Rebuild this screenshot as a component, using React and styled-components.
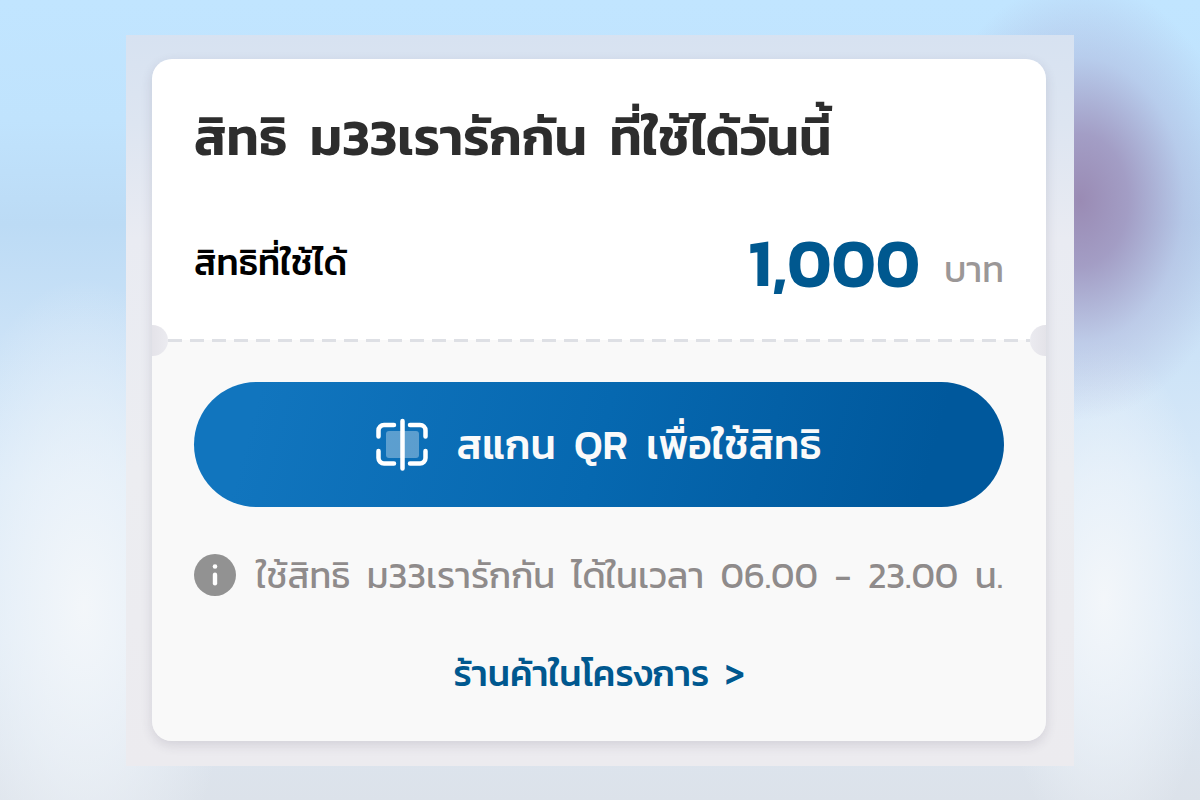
import React from 'react';
import styled, { createGlobalStyle } from 'styled-components';

const GlobalStyle = createGlobalStyle`
  *, *::before, *::after { box-sizing: border-box; }
  body {
    margin: 0;
    font-family: Kanit, Prompt, "Noto Sans Thai", "Noto Sans", "Open Sans", sans-serif;
  }
`;

const Page = styled.div`
  min-height: 100vh;
  padding: 35px 24px 34px;
  background:
    radial-gradient(ellipse 160px 220px at 90% 25%, #9a8bb4 0%, rgba(158, 146, 188, 0.85) 30%, rgba(170, 170, 210, 0.4) 65%, rgba(180, 200, 235, 0) 100%),
    radial-gradient(ellipse 150px 330px at 7% 76%, rgba(244, 247, 250, 0.95) 0%, rgba(240, 245, 250, 0.6) 50%, rgba(235, 243, 250, 0) 100%),
    radial-gradient(ellipse 110px 260px at 92% 75%, rgba(244, 247, 250, 0.95) 0%, rgba(240, 245, 250, 0.6) 50%, rgba(235, 243, 250, 0) 100%),
    linear-gradient(180deg, #c1e5ff 0%, #c0e3fd 15%, #bcdbf5 28%, #cbe2f7 42%, #d8e9f8 60%, #dde9f5 80%, #dce2ea 100%);
`;

const Panel = styled.main`
  width: 79vw;
  min-width: 320px;
  margin: 0 auto;
  padding: 24px 28px 25px 26px;
  background: linear-gradient(180deg, #d7e2f1 0%, #dde5f1 12%, #e9ebf2 28%, #ecedf1 60%, #ecebef 100%);
`;

const Ticket = styled.article`
  border-radius: 20px;
  box-shadow: 0 4px 12px rgba(60, 50, 80, 0.14);
  white-space: pre-wrap;
`;

const Balance = styled.section`
  padding: 42px;
  min-height: 281px;
  background: #fff;
  border-radius: 20px 20px 0 0;
`;

const Title = styled.h1`
  margin: 0 0 57px;
  font-size: 52px;
  line-height: 72px;
  font-weight: 600;
  color: #2d2d2d;
`;

const BalanceRow = styled.div`
  display: flex;
  align-items: center;
  justify-content: space-between;
`;

const Label = styled.span`
  font-size: 36px;
  line-height: 56px;
  font-weight: 500;
  color: #000;
`;

const Amount = styled.p`
  display: flex;
  align-items: flex-end;
  gap: 24px;
  margin: 0;
`;

const Value = styled.strong`
  font-size: 67px;
  line-height: 64px;
  font-weight: 600;
  color: #00588f;
`;

const Unit = styled.span`
  font-size: 36px;
  line-height: 50px;
  font-weight: 400;
  color: #9b9797;
`;

const Actions = styled.section`
  position: relative;
  display: flex;
  flex-direction: column;
  padding: 42px 42px 40px;
  background: #f9f9f9;
  border-radius: 0 0 20px 20px;
`;

const Perforation = styled.div`
  position: absolute;
  top: -16px;
  left: 0;
  right: 0;
  height: 32px;
  display: flex;
  align-items: center;
  justify-content: space-between;
`;

const Notch = styled.span`
  width: 16px;
  height: 31px;
  border-radius: ${({ $side }) => ($side === 'left' ? '0 16px 16px 0' : '16px 0 0 16px')};
  background: linear-gradient(${({ $side }) => ($side === 'left' ? '90deg' : '270deg')}, #e4e3e9, #ebebf0);
`;

const Dashes = styled.span`
  flex: 1;
  height: 3px;
  background: repeating-linear-gradient(90deg, #dee0e5 0 14px, transparent 14px 22px);
`;

const ScanButton = styled.button`
  display: flex;
  align-items: center;
  justify-content: center;
  gap: 28px;
  min-height: 125px;
  padding: 0 24px;
  border: 0;
  border-radius: 63px;
  background: linear-gradient(105deg, #1175be 8%, #0668b0 50%, #00589c 90%);
  color: #fafafa;
  font: inherit;
  font-size: 41px;
  line-height: 56px;
  font-weight: 500;
  white-space: inherit;
  cursor: pointer;
`;

const Notice = styled.p`
  display: flex;
  align-items: center;
  gap: 20px;
  margin: 40px 0 42px;
  font-size: 36px;
  line-height: 56px;
  font-weight: 400;
  color: #8f8b8b;
`;

const ShopLink = styled.a`
  align-self: center;
  font-size: 36px;
  line-height: 56px;
  font-weight: 500;
  color: #00588f;
  text-decoration: none;
`;

function ScanIcon() {
  return (
    <svg width="52" height="54" viewBox="0 0 52 54" fill="none" aria-hidden="true">
      <rect x="10" y="13" width="33" height="27" rx="3" fill="#fff" fillOpacity="0.33" />
      <path
        d="M2.500 18.500V12.500a5.500 5.500 0 0 1 5.500-5.500H18M34 7h10a5.500 5.500 0 0 1 5.500 5.500v6M49.500 33v7a5.500 5.500 0 0 1-5.500 5.500H34M18 45.500H8a5.500 5.500 0 0 1-5.500-5.500v-7M26.500 3v47.500"
        stroke="#fff"
        strokeWidth="4.500"
        strokeLinecap="round"
      />
    </svg>
  );
}

function InfoIcon() {
  return (
    <svg width="42" height="42" viewBox="0 0 42 42" aria-hidden="true">
      <circle cx="21" cy="21" r="21" fill="#929292" />
      <circle cx="21" cy="12.500" r="2.300" fill="#fff" />
      <rect x="18.800" y="18.500" width="4.400" height="13" rx="2.200" fill="#fff" />
    </svg>
  );
}

export default function App() {
  return (
    <Page>
      <GlobalStyle />
      <Panel lang="th">
        <Ticket>
          <Balance>
            <Title>สิทธิ  ม33เรารักกัน  ที่ใช้ได้วันนี้</Title>
            <BalanceRow>
              <Label>สิทธิที่ใช้ได้</Label>
              <Amount>
                <Value>1,000</Value>
                <Unit>บาท</Unit>
              </Amount>
            </BalanceRow>
          </Balance>
          <Actions>
            <Perforation aria-hidden="true">
              <Notch $side="left" />
              <Dashes />
              <Notch $side="right" />
            </Perforation>
            <ScanButton type="button">
              <ScanIcon />
              <span>สแกน  QR  เพื่อใช้สิทธิ</span>
            </ScanButton>
            <Notice>
              <InfoIcon />
              <span>ใช้สิทธิ  ม33เรารักกัน  ได้ในเวลา  06.00  -  23.00  น.</span>
            </Notice>
            <ShopLink href="#shops">ร้านค้าในโครงการ  &gt;</ShopLink>
          </Actions>
        </Ticket>
      </Panel>
    </Page>
  );
}
